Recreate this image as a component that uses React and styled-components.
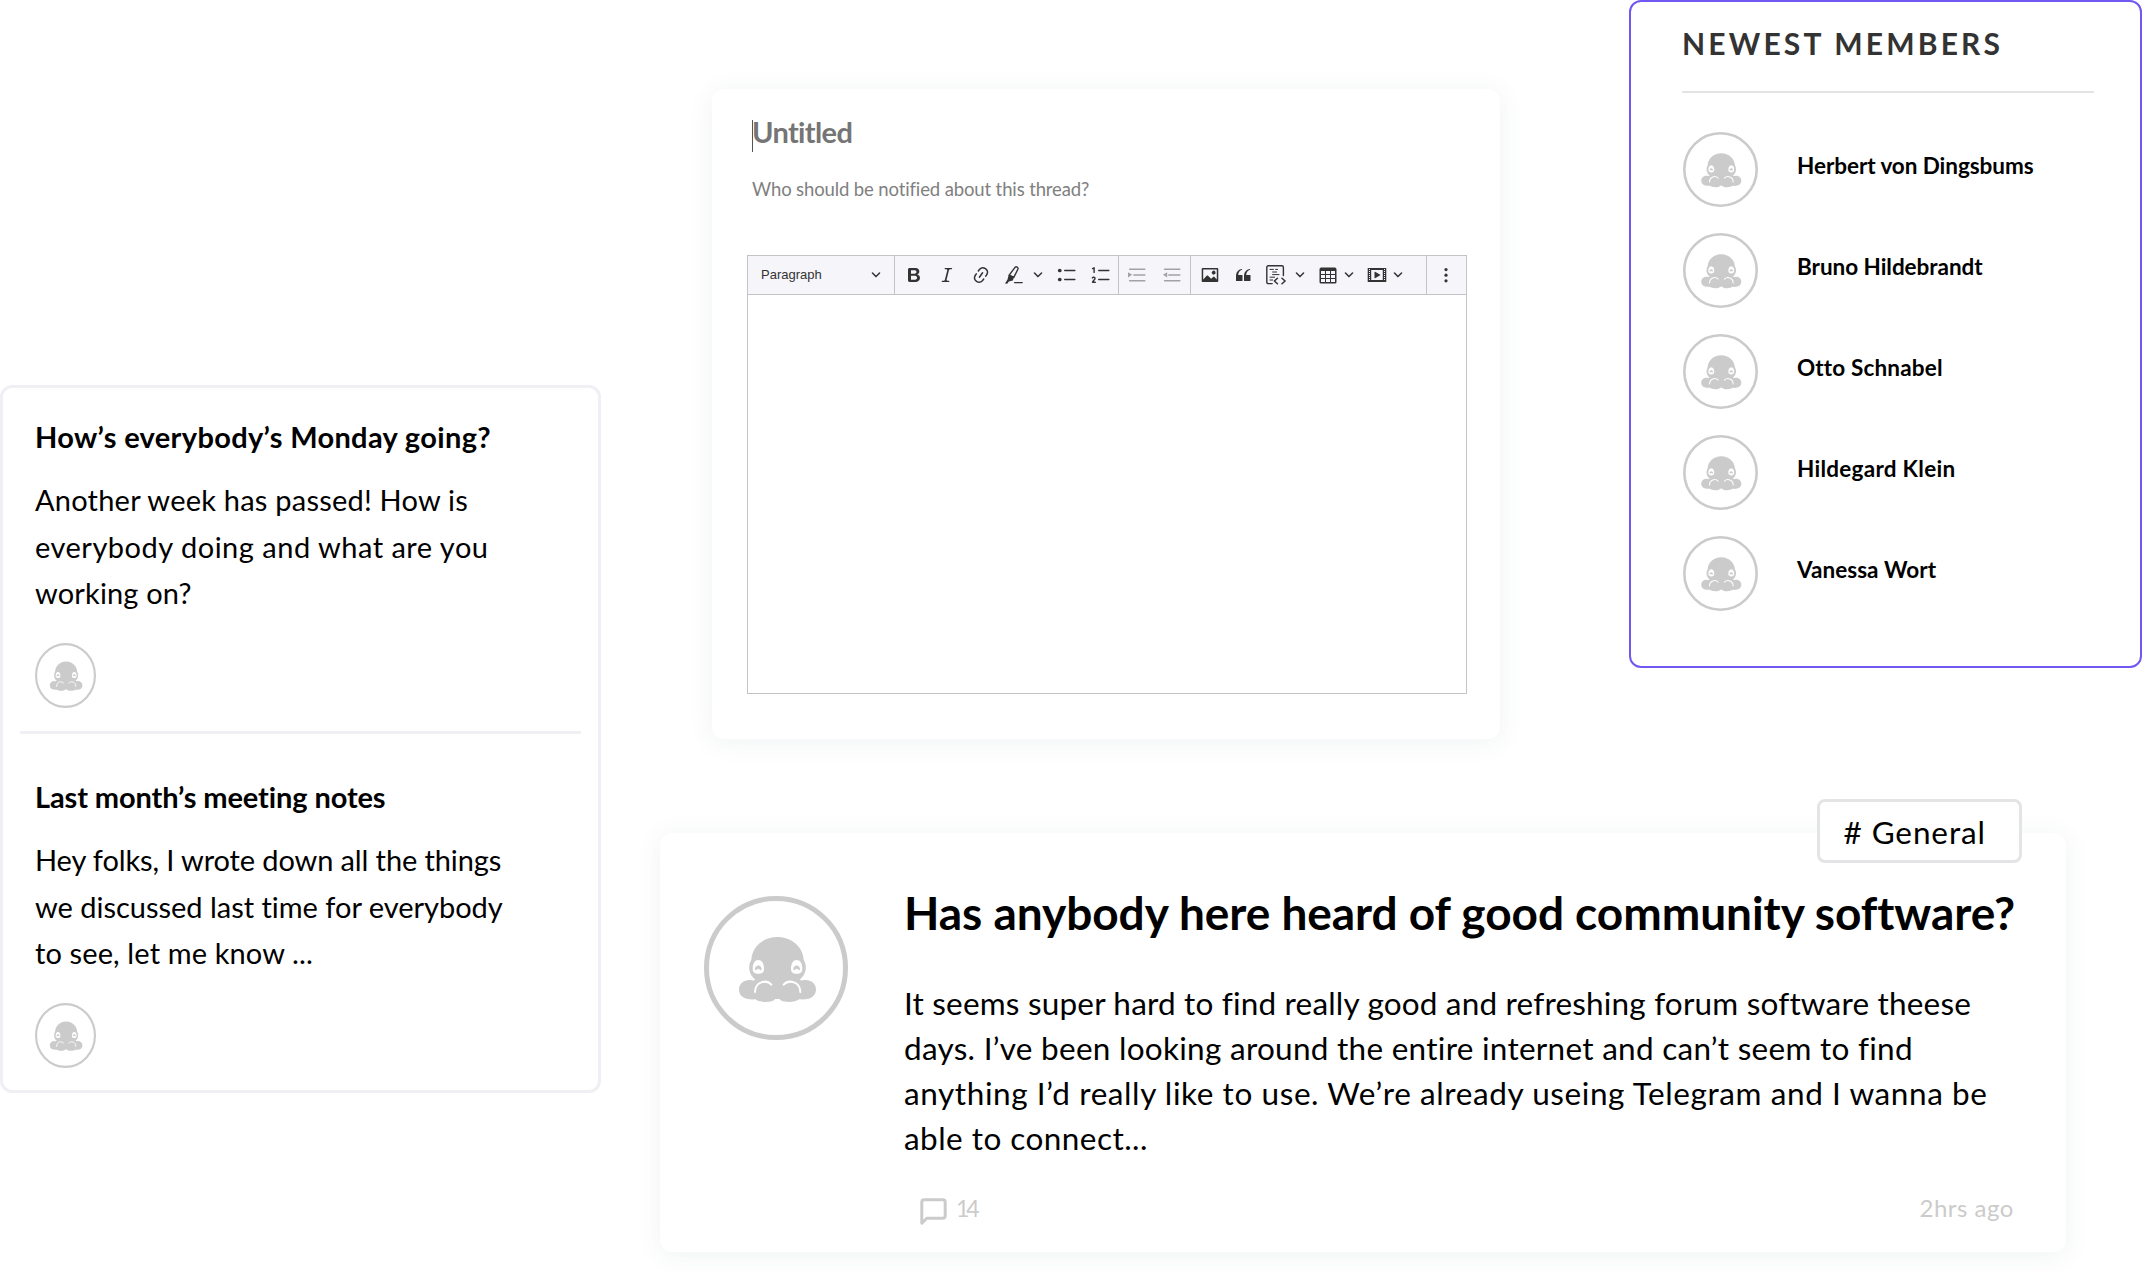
import React from "react";
import styled, { createGlobalStyle } from "styled-components";

const GlobalStyle = createGlobalStyle`
  *, *::before, *::after { box-sizing: border-box; }
  body { margin: 0; background: #ffffff; }
  h1, h2, h3, p, ul { margin: 0; padding: 0; font-size: inherit; font-weight: inherit; }
  ul { list-style: none; }
  svg { display: block; flex: none; }
`;

const Page = styled.div`
  display: flex;
  align-items: flex-start;
  width: 2142px;
  height: 1272px;
  overflow: hidden;
  background: #ffffff;
  color: #000;
  font-family: Lato, "Open Sans", sans-serif;
`;

const Sidebar = styled.aside`
  flex: none;
  width: 601px;
  padding-top: 385px;
`;

const Main = styled.main`
  flex: 1;
  min-width: 0;
`;

const TopRow = styled.div`
  display: flex;
  justify-content: space-between;
  align-items: flex-start;
  height: 833px;
  padding-left: 111px;
`;

const Line = styled.span`
  display: block;
  white-space: nowrap;
  letter-spacing: ${(p) => p.$track || 0}px;
  font-variant-ligatures: common-ligatures;
`;

/* thread list */

const ThreadCard = styled.section`
  height: 708px;
  border: 3px solid #efeff4;
  border-radius: 12px;
`;

const Thread = styled.article`
  padding: ${(p) => p.$top}px 32px 0;
`;

const ThreadTitle = styled.h3`
  font-size: 29px;
  font-weight: 700;
  line-height: 36px;
  margin-bottom: 21.4px;
`;

const ThreadText = styled.p`
  font-size: 29px;
  line-height: 46.8px;
  margin-bottom: 26.2px;
`;

const ThreadDivider = styled.div`
  height: 3px;
  margin: 22.5px 17px 0;
  background: #efeff4;
`;

/* editor */

const shadow = "0 3px 26px rgba(50, 75, 95, 0.075)";

const EditorCard = styled.section`
  width: 788px;
  height: 650px;
  margin-top: 89px;
  padding: 25px 33.5px 0 35px;
  border-radius: 12px;
  background: #fff;
  box-shadow: ${shadow};
`;

const EditorTitle = styled.h2`
  position: relative;
  padding-left: 5px;
  font-size: 29px;
  font-weight: 700;
  line-height: 36px;
  color: #757575;
`;

const Caret = styled.i`
  position: absolute;
  left: 5px;
  top: 6px;
  width: 1px;
  height: 32px;
  background: #555;
`;

const EditorHint = styled.p`
  padding-left: 5px;
  margin-top: 27px;
  font-size: 18.5px;
  line-height: 24px;
  color: #808080;
`;

const EditorBox = styled.div`
  height: 439px;
  margin-top: 54px;
  border: 1px solid #c4c4c6;
`;

const Toolbar = styled.div`
  display: flex;
  height: 39px;
  background: #f5f5fa;
  border-bottom: 1px solid #c4c4c6;
`;

const ToolGroup = styled.div`
  display: flex;
  align-items: center;
  width: ${(p) => p.$width}px;
  padding-left: ${(p) => p.$pad}px;
  gap: ${(p) => p.$gap || 0}px;
  border-right: ${(p) => (p.$last ? "0" : "1px solid #c4c4c6")};
  color: ${(p) => (p.$muted ? "#a2a2a6" : "#333")};
`;

const Tool = styled.span`
  display: flex;
  align-items: center;
  gap: ${(p) => p.$gap || 0}px;
`;

const StyleName = styled.span`
  width: 109.5px;
  font: 13px/20px "Liberation Sans", Arial, sans-serif;
`;

/* members */

const MembersCard = styled.section`
  width: 513px;
  height: 668px;
  padding: 22.9px 46px 0 51px;
  border: 2px solid #7357f2;
  border-radius: 12px;
`;

const MembersTitle = styled.h2`
  font-size: 30px;
  font-weight: 700;
  line-height: 36px;
  color: #333;
`;

const MembersRule = styled.div`
  height: 2px;
  margin: 30.1px 0 39px;
  background: #e3e3e5;
`;

const MemberList = styled.ul`
  display: flex;
  flex-direction: column;
  gap: 26px;
  padding-left: 1px;
`;

const Member = styled.li`
  display: flex;
  gap: 39px;
  height: 75px;
`;

const MemberName = styled.span`
  padding-top: 19.5px;
  font-size: 22.5px;
  font-weight: 700;
  line-height: 30px;
`;

/* post */

const PostCard = styled.article`
  position: relative;
  display: flex;
  width: 1406px;
  height: 419px;
  margin-left: 59px;
  padding: 52px 52px 0 44px;
  border-radius: 12px;
  background: #fff;
  box-shadow: ${shadow};
`;

const PostAvatar = styled.div`
  width: 200px;
  padding-top: 11px;
`;

const PostContent = styled.div`
  flex: 1;
  min-width: 0;
`;

const PostTitle = styled.h1`
  font-size: 46px;
  font-weight: 700;
  line-height: 56px;
  margin-bottom: 39.5px;
`;

const PostText = styled.p`
  font-size: 31.5px;
  line-height: 45.1px;
`;

const PostFooter = styled.footer`
  display: flex;
  justify-content: space-between;
  margin-top: 32.5px;
  padding-left: 16px;
  font-size: 24px;
  line-height: 30px;
  color: #cbcbcb;
`;

const Replies = styled.div`
  display: flex;
  gap: 9px;
  font-size: 23px;

  svg { margin-top: 5px; }
`;

const Tag = styled.div`
  position: absolute;
  right: 44px;
  top: -34px;
  width: 205px;
  height: 64px;
  padding-left: 23.5px;
  border: 3px solid #e4e4e7;
  border-radius: 8px;
  background: #fff;
  font-size: 31.5px;
  line-height: 61px;
`;

function Avatar({ width, height }) {
  return (
    <svg width={width} height={height} viewBox="24 30 432 432" preserveAspectRatio="none" fill="#cbcbcb">
      <circle cx="240" cy="246" r="208.5" fill="none" stroke="#cbcbcb" strokeWidth="15" />
      <path d="M244 153C201 153 168 183 166 221C156 238 156 264 178 281C174 284 170 284 164 282C146 280 129 292 129 310C129 332 146 342 178 340C190 350 232 351 237 339H251C256 351 298 350 310 340C342 343 360 332 360 310C360 292 343 280 325 282C319 284 315 284 311 281C333 264 333 238 323 221C321 183 287 153 244 153Z" />
      <g fill="#fff">
        <path d="M187 222C175 222 170 235 170 248C170 260 177 263 187 263C197 263 204 260 204 248C204 235 199 222 187 222Z" />
        <path d="M302 222C290 222 285 235 285 248C285 260 292 263 302 263C312 263 319 260 319 248C319 235 314 222 302 222Z" />
      </g>
      <path d="M177 251C176 234 198 234 197 251L192 252C190 247 184 247 182 252ZM292 251C291 234 313 234 312 251L307 252C305 247 299 247 297 252Z" />
      <g fill="none" stroke="#fff" strokeWidth="6" strokeLinecap="round">
        <path d="M177 318C177 287 211 279 226 296" />
        <path d="M263 296C278 279 313 287 313 318" />
      </g>
    </svg>
  );
}

function Icon({ d, children, width = 20, height = 20, box = "0 0 20 20" }) {
  return (
    <svg width={width} height={height} viewBox={box} fill="currentColor">
      {d && <path d={d} />}
      {children}
    </svg>
  );
}

const Chevron = () => (
  <Icon
    width={10}
    height={10}
    box="0 0 10 10"
    d="M.941 3.523a.75.75 0 1 1 1.06-1.06l3.006 3.005 3.005-3.005a.75.75 0 1 1 1.06 1.06l-3.549 3.55a.75.75 0 0 1-1.168-.136L.941 3.523z"
  />
);

const paths = {
  bold: "M10.187 17H5.773c-.637 0-1.092-.138-1.364-.415-.273-.277-.409-.718-.409-1.323V4.738c0-.617.14-1.062.419-1.332.279-.27.73-.406 1.354-.406h4.68c.69 0 1.288.041 1.793.124.506.083.96.242 1.36.477.341.197.644.447.906.75a3.262 3.262 0 0 1 .808 2.162c0 1.401-.722 2.426-2.167 3.075C15.05 10.175 16 11.315 16 13.01a3.756 3.756 0 0 1-2.296 3.504 6.1 6.1 0 0 1-1.517.377c-.571.073-1.238.11-2 .11zm-.217-6.217H7v4.087h3.069c1.977 0 2.965-.69 2.965-2.072 0-.707-.256-1.22-.768-1.537-.512-.319-1.277-.478-2.296-.478zM7 5.13v3.619h2.606c.729 0 1.292-.067 1.69-.2a1.6 1.6 0 0 0 .91-.765c.165-.267.247-.566.247-.897 0-.707-.26-1.176-.778-1.409-.519-.232-1.31-.348-2.375-.348H7z",
  italic: "m9.586 14.633.021.004c-.036.335.095.655.393.962.082.083.173.15.274.201h1.474a.6.6 0 1 1 0 1.2H5.304a.6.6 0 0 1 0-1.2h1.15c.474-.07.809-.182 1.005-.334.157-.122.291-.32.404-.597l2.416-9.55a1.053 1.053 0 0 0-.281-.823 1.12 1.12 0 0 0-.442-.296H8.15a.6.6 0 0 1 0-1.2h6.443a.6.6 0 1 1 0 1.2h-1.195c-.376.056-.65.155-.823.296-.215.175-.423.439-.623.79l-2.366 9.347z",
  link: "m11.077 15 .991-1.416a.75.75 0 1 1 1.229.86l-1.148 1.64a.748.748 0 0 1-.217.206 5.251 5.251 0 0 1-8.503-5.955.741.741 0 0 1 .12-.274l1.147-1.639a.75.75 0 1 1 1.228.86L4.933 10.7l.006.003a3.75 3.75 0 0 0 6.132 4.294l.006.004zm5.494-5.335a.748.748 0 0 1-.12.274l-1.147 1.639a.75.75 0 1 1-1.228-.86l.86-1.23a3.75 3.75 0 0 0-6.144-4.301l-.86 1.229a.75.75 0 0 1-1.229-.86l1.148-1.64a.748.748 0 0 1 .217-.206 5.251 5.251 0 0 1 8.503 5.955zm-4.563-2.532a.75.75 0 0 1 .184 1.045l-3.155 4.505a.75.75 0 1 1-1.229-.86l3.155-4.506a.75.75 0 0 1 1.045-.184z",
  image: "M6.91 10.54c.26-.23.64-.21.88.03l3.36 3.14 2.23-2.06a.64.64 0 0 1 .87 0l2.52 2.97V4.5H3.2v10.12l3.71-4.08zm10.27-7.51c.6 0 1.09.47 1.09 1.05v11.84c0 .59-.49 1.06-1.09 1.06H2.79c-.6 0-1.09-.47-1.09-1.06V4.08c0-.58.49-1.05 1.1-1.05h14.38zm-5.22 5.56a1.96 1.96 0 1 1 3.4-1.96 1.96 1.96 0 0 1-3.4 1.96z",
  quote: "M3 10.423a6.5 6.5 0 0 1 6.056-6.408l.038.67C6.448 5.423 5.354 7.663 5.22 10H9c.552 0 .5.432.5.986v4.511c0 .554-.448.503-1 .503h-5c-.552 0-.5-.449-.5-1.003v-4.574zm8 0a6.5 6.5 0 0 1 6.056-6.408l.038.67c-2.646.739-3.74 2.979-3.873 5.315H17c.552 0 .5.432.5.986v4.511c0 .554-.448.503-1 .503h-5c-.552 0-.5-.449-.5-1.003v-4.574z",
  table: "M3 6v3h4V6H3zm0 4v3h4v-3H3zm0 4v3h4v-3H3zm5 3h4v-3H8v3zm5 0h4v-3h-4v3zm4-4v-3h-4v3h4zm0-4V6h-4v3h4zm1.5 8a1.5 1.5 0 0 1-1.5 1.5H3A1.5 1.5 0 0 1 1.5 17V4c.222-.863 1.068-1.5 2-1.5h13c.932 0 1.778.637 2 1.5v13zM12 13v-3H8v3h4zm0-4V6H8v3h4z",
  media: "M18.68 3.03c.6 0 .59-.03.59.55v12.84c0 .59.01.56-.59.56H1.29c-.6 0-.59.03-.59-.56V3.58c0-.58-.01-.55.6-.55h17.38zM15.77 15V5H4.2v10h11.57zM2 4v1h1V4H2zm0 2v1h1V6H2zm0 2v1h1V8H2zm0 2v1h1v-1H2zm0 2v1h1v-1H2zm0 2v1h1v-1H2zM17 4v1h1V4h-1zm0 2v1h1V6h-1zm0 2v1h1V8h-1zm0 2v1h1v-1h-1zm0 2v1h1v-1h-1zm0 2v1h1v-1h-1zM7.5 7.177a.4.4 0 0 1 .593-.351l5.133 2.824a.4.4 0 0 1 0 .7l-5.133 2.824a.4.4 0 0 1-.593-.35V7.176v.001z",
};

const stroke = { fill: "none", stroke: "currentColor", strokeLinecap: "round", strokeLinejoin: "round" };

const Marker = () => (
  <Icon>
    <path d="M11.2 2.2C12.2 1.2 14.4 2.4 14 4L9.8 12.4 5.2 10.2Z" {...stroke} strokeWidth="1.4" />
    <path d="M4.8 9.4 10.1 12 8.8 15.4 4.8 16.6 3.2 18.8 1 18.6 3.4 14.8Z" />
    <path d="M10.6 17.6H18.2" {...stroke} strokeWidth="1.4" />
  </Icon>
);

const Bullets = () => (
  <Icon>
    <circle cx="2.75" cy="5.5" r="1.85" />
    <circle cx="2.75" cy="14.5" r="1.85" />
    <path d="M7.75 5.5H17.8M7.75 14.5H17.8" {...stroke} strokeWidth="1.5" />
  </Icon>
);

const Numbers = () => (
  <Icon>
    <path d="M1.6 3.6 3.1 2.8V7.4M1.4 12.9C2 11.9 4.2 12 4 13.6 3.8 14.9 2 15.6 1.5 17.2H4.3" {...stroke} strokeWidth="1.4" />
    <path d="M7.75 5.5H17.8M7.75 14.5H17.8" {...stroke} strokeWidth="1.5" />
  </Icon>
);

const Indent = ({ out }) => (
  <Icon>
    <path d="M2.6 4.2H17.8M6.8 10H17.8M2.6 15.8H17.8" {...stroke} strokeWidth="1.5" />
    <path d={out ? "M5.2 7.2V12.4L1 9.8Z" : "M1 7.2V12.4L5.2 9.8Z"} />
  </Icon>
);

const CodeSnippet = () => (
  <Icon>
    <path d="M6.2 18.6H2.4Q.8 18.6.8 17V2.4Q.8.8 2.4.8H15.8Q17.4.8 17.4 2.4V10.6" {...stroke} strokeWidth="1.4" />
    <path d="M4 4.4H7.4M6.6 7H10.6M6.6 9.6H13M9.6 4.4H11.6M4 12.2H8.6M4 15H6.6" {...stroke} strokeWidth="1" />
    <path d="M11.4 13.2 8.4 16 11.4 18.8M16 13.2 19.1 16 16 18.8" {...stroke} strokeWidth="1.5" />
  </Icon>
);

const Dots = () => (
  <Icon>
    <circle cx="10" cy="4.6" r="1.6" />
    <circle cx="10" cy="10.2" r="1.6" />
    <circle cx="10" cy="15.8" r="1.6" />
  </Icon>
);

const CommentIcon = () => (
  <svg width="27" height="27" viewBox="0 0 27 27" fill="none" stroke="currentColor" strokeWidth="3" strokeLinejoin="round">
    <path d="M1.8 25.2V4.2Q1.8 1.8 4.2 1.8H22.8Q25.2 1.8 25.2 4.2V17.8Q25.2 20.2 22.8 20.2H6.8Z" />
  </svg>
);

const threads = [
  {
    top: 31.4,
    title: ["How’s everybody’s Monday going?", 0.338],
    lines: [
      ["Another week has passed! How is", 0.22],
      ["everybody doing and what are you", 0.5],
      ["working on?", 0.15],
    ],
  },
  {
    top: 45.5,
    title: ["Last month’s meeting notes", -0.11],
    lines: [
      ["Hey folks, I wrote down all the things", -0.116],
      ["we discussed last time for everybody", -0.02],
      ["to see, let me know ...", 0.12],
    ],
  },
];

const members = [
  ["Herbert von Dingsbums", -0.06],
  ["Bruno Hildebrandt", -0.04],
  ["Otto Schnabel", 0.166],
  ["Hildegard Klein", 0.27],
  ["Vanessa Wort", 0.05],
];

const postLines = [
  ["It seems super hard to find really good and refreshing forum software theese", 0.185],
  ["days. I’ve been looking around the entire internet and can’t seem to find", 0.275],
  ["anything I’d really like to use. We’re already useing Telegram and I wanna be", 0.59],
  ["able to connect...", 0.461],
];

const Lines = ({ items }) => items.map(([text, track]) => <Line key={text} $track={track}>{text}</Line>);

export default function App() {
  return (
    <Page>
      <GlobalStyle />
      <Sidebar>
        <ThreadCard>
          {threads.map((t, i) => (
            <React.Fragment key={t.top}>
              {i > 0 && <ThreadDivider />}
              <Thread $top={t.top}>
                <ThreadTitle><Lines items={[t.title]} /></ThreadTitle>
                <ThreadText><Lines items={t.lines} /></ThreadText>
                <Avatar width={61} height={65} />
              </Thread>
            </React.Fragment>
          ))}
        </ThreadCard>
      </Sidebar>
      <Main>
        <TopRow>
          <EditorCard>
            <EditorTitle>
              <Caret />
              <Line $track={-0.63}>Untitled</Line>
            </EditorTitle>
            <EditorHint><Line $track={-0.127}>Who should be notified about this thread?</Line></EditorHint>
            <EditorBox>
              <Toolbar>
                <ToolGroup $width={147} $pad={13}>
                  <StyleName>Paragraph</StyleName>
                  <Chevron />
                </ToolGroup>
                <ToolGroup $width={224} $pad={9} $gap={13.5}>
                  <Icon d={paths.bold} />
                  <Icon d={paths.italic} />
                  <Icon d={paths.link} />
                  <Tool $gap={9}><Marker /><Chevron /></Tool>
                  <Tool $gap={14}><Bullets /><Numbers /></Tool>
                </ToolGroup>
                <ToolGroup $width={72} $pad={8.5} $gap={14.5} $muted>
                  <Indent />
                  <Indent out />
                </ToolGroup>
                <ToolGroup $width={236} $pad={9} $gap={13.2}>
                  <Icon d={paths.image} />
                  <Icon d={paths.quote} />
                  <Tool $gap={9}><CodeSnippet /><Chevron /></Tool>
                  <Tool $gap={6}><Icon d={paths.table} /><Chevron /></Tool>
                  <Tool $gap={6}><Icon d={paths.media} /><Chevron /></Tool>
                </ToolGroup>
                <ToolGroup $width={39} $pad={9} $last>
                  <Dots />
                </ToolGroup>
              </Toolbar>
            </EditorBox>
          </EditorCard>
          <MembersCard>
            <MembersTitle><Line $track={3.18}>NEWEST MEMBERS</Line></MembersTitle>
            <MembersRule />
            <MemberList>
              {members.map(([name, track]) => (
                <Member key={name}>
                  <Avatar width={75} height={75} />
                  <MemberName><Line $track={track}>{name}</Line></MemberName>
                </Member>
              ))}
            </MemberList>
          </MembersCard>
        </TopRow>
        <PostCard>
          <Tag><Line $track={0.9}># General</Line></Tag>
          <PostAvatar><Avatar width={144} height={144} /></PostAvatar>
          <PostContent>
            <PostTitle><Line $track={-0.045}>Has anybody here heard of good community software?</Line></PostTitle>
            <PostText><Lines items={postLines} /></PostText>
            <PostFooter>
              <Replies>
                <CommentIcon />
                <Line $track={-3}>14</Line>
              </Replies>
              <Line $track={0.525}>2hrs ago</Line>
            </PostFooter>
          </PostContent>
        </PostCard>
      </Main>
    </Page>
  );
}
